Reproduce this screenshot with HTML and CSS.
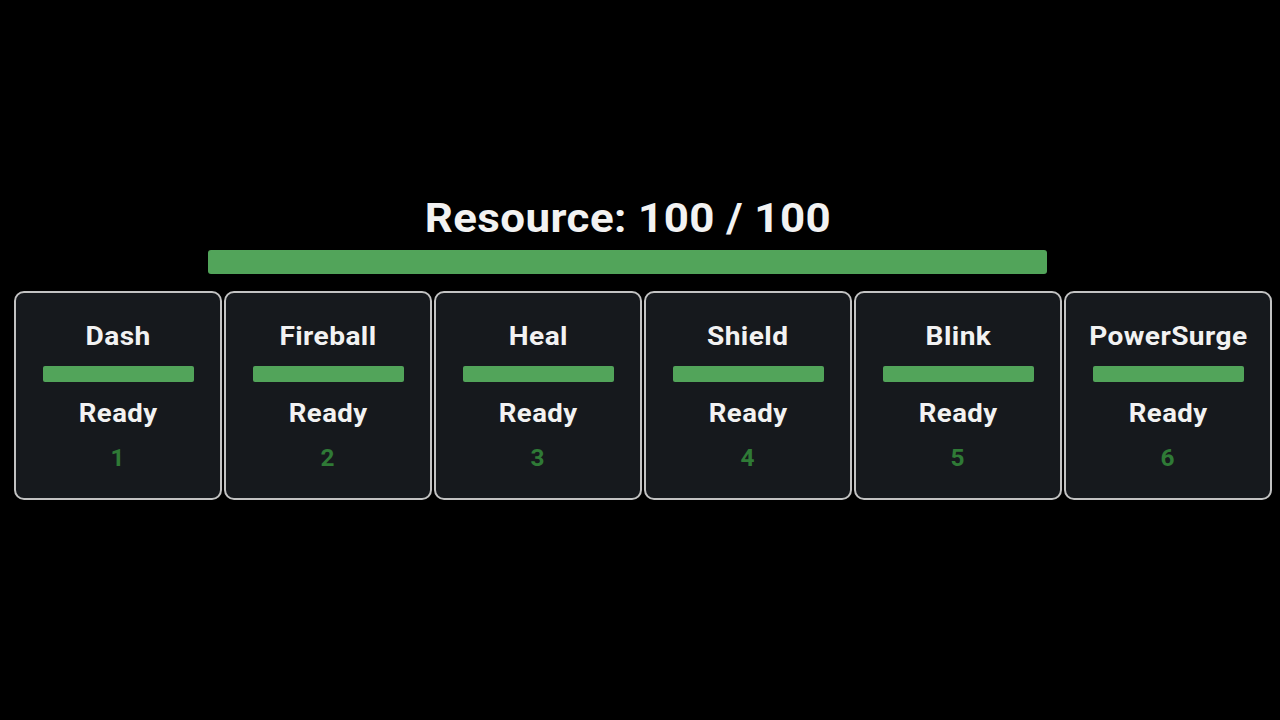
FILE: index.html
```html
<!DOCTYPE html>
<html>
<head>
<meta charset="utf-8">
<link rel="stylesheet" href="styles.css">
</head>
<body>
<div class="hud">
  <div class="resource">
    <div class="resource-label">Resource: 100 / 100</div>
    <div class="resource-bar"><div class="resource-fill" style="width:100%"></div></div>
  </div>
  <div class="abilities">
    <div class="card"><div class="name">Dash</div><div class="cd"><div class="cd-fill" style="width:100%"></div></div><div class="status">Ready</div><div class="key">1</div></div>
    <div class="card"><div class="name">Fireball</div><div class="cd"><div class="cd-fill" style="width:100%"></div></div><div class="status">Ready</div><div class="key">2</div></div>
    <div class="card"><div class="name">Heal</div><div class="cd"><div class="cd-fill" style="width:100%"></div></div><div class="status">Ready</div><div class="key">3</div></div>
    <div class="card"><div class="name">Shield</div><div class="cd"><div class="cd-fill" style="width:100%"></div></div><div class="status">Ready</div><div class="key">4</div></div>
    <div class="card"><div class="name">Blink</div><div class="cd"><div class="cd-fill" style="width:100%"></div></div><div class="status">Ready</div><div class="key">5</div></div>
    <div class="card"><div class="name">PowerSurge</div><div class="cd"><div class="cd-fill" style="width:100%"></div></div><div class="status">Ready</div><div class="key">6</div></div>
  </div>
</div>
</body>
</html>
```
FILE: styles.css
```css
html, body {
  margin: 0;
  padding: 0;
  background: #000;
  width: 1280px;
  height: 720px;
  overflow: hidden;
  font-family: Roboto, "Liberation Sans", sans-serif;
  color: #f2f2f2;
}
.hud {
  padding-top: 193px;
}
.resource {
  margin-left: 208px;
  width: 839px;
  display: flex;
  flex-direction: column;
  align-items: center;
}
.resource-label {
  font-size: 41px;
  font-weight: 700;
  line-height: 50px;
  letter-spacing: 0.4px;
  transform: scaleX(1.07);
}
.resource-bar {
  margin-top: 7px;
  width: 100%;
  height: 24px;
  border-radius: 3px;
  background: #2a2a2a;
  overflow: hidden;
}
.resource-fill {
  height: 100%;
  background: #52a45a;
}
.abilities {
  margin-top: 17px;
  padding-left: 14px;
  display: grid;
  grid-template-columns: repeat(6, 208px);
  column-gap: 2px;
}
.card {
  box-sizing: border-box;
  height: 209px;
  border: 2.5px solid #c2c2c2;
  border-radius: 10px;
  background: #16191d;
  display: flex;
  flex-direction: column;
  align-items: center;
  padding-top: 26px;
}
.name {
  font-size: 26px;
  font-weight: 700;
  line-height: 34px;
  letter-spacing: 0.4px;
  transform: scaleX(1.08);
}
.cd {
  margin-top: 13px;
  width: 151px;
  height: 16px;
  border-radius: 2px;
  background: #333;
  overflow: hidden;
}
.cd-fill {
  height: 100%;
  background: #52a45a;
}
.status {
  margin-top: 14px;
  font-size: 26px;
  font-weight: 700;
  line-height: 34px;
  letter-spacing: 0.4px;
  transform: scaleX(1.06);
}
.key {
  margin-top: 15px;
  font-size: 23px;
  font-weight: 700;
  line-height: 28px;
  color: #2f7a36;
  transform: scaleX(1.06);
}
```
